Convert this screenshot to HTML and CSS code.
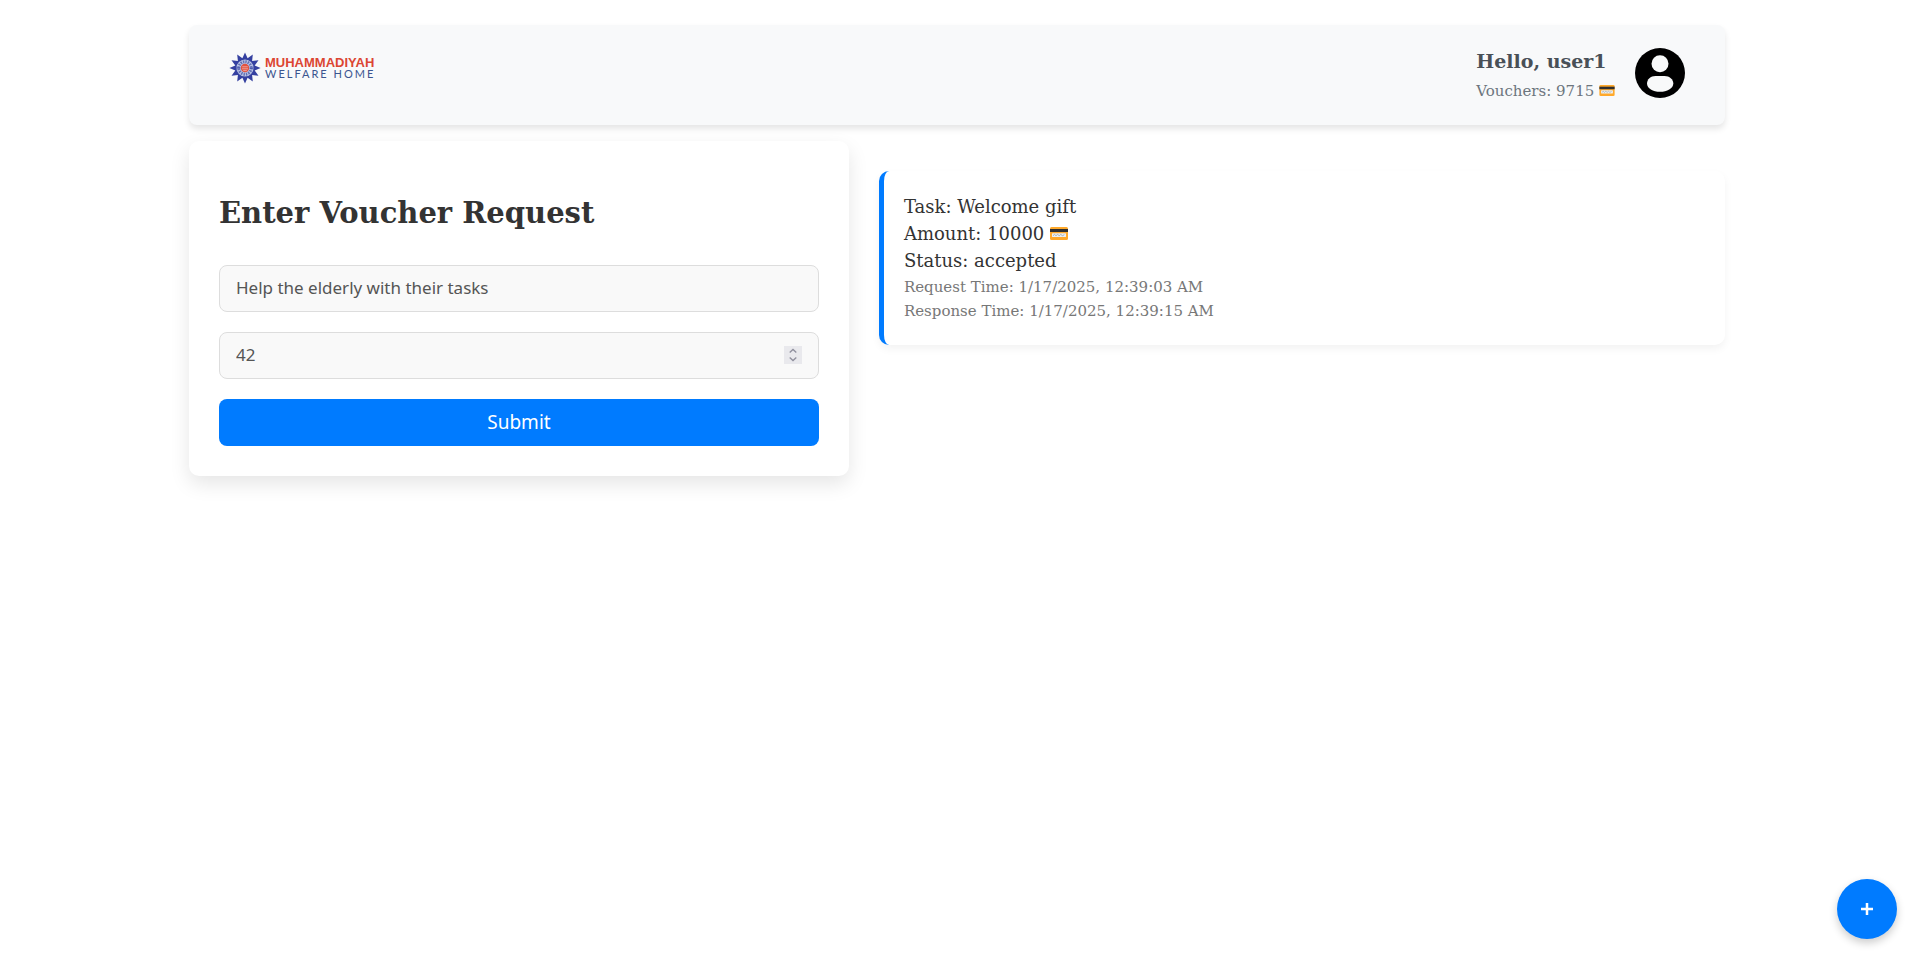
FILE: index.html
```html
<!DOCTYPE html>
<html lang="en">
<head>
<meta charset="utf-8">
<title>Voucher Requests</title>
<link rel="stylesheet" href="styles.css">
</head>
<body>
<svg class="defs" width="0" height="0" aria-hidden="true">
  <symbol id="card" viewBox="0 0 18 13">
    <rect width="18" height="13" rx="1.5" fill="#ffa92b"/>
    <rect y="2" width="18" height="3" fill="#2f2f2f"/>
    <rect x="2" y="6.3" width="14" height="3.6" rx=".5" fill="#eceff1"/>
    <path d="M3 8.7l1.5-1.3 1.5 1.3 1.6-1.3 1.6 1.3 1.6-1.3 1.6 1.3 2-1" fill="none" stroke="#8a989f" stroke-width=".7"/>
  </symbol>
</svg>
<div class="container">
  <header class="header">
    <div class="logo">
      <svg class="emblem" viewBox="-16 -16 32 32" aria-hidden="true">
        <path fill="#3440a0" d="M0-15.6 2.6-9.7 7.8-13.5 7.1-7.1 13.5-7.8 9.7-2.6 15.6 0 9.7 2.6 13.5 7.8 7.1 7.1 7.8 13.5 2.6 9.7 0 15.6-2.6 9.7-7.8 13.5-7.1 7.1-13.5 7.8-9.7 2.6-15.6 0-9.7-2.6-13.5-7.8-7.1-7.1-7.8-13.5-2.6-9.7z"/>
        <circle r="8.6" fill="#bcc5e6"/>
        <circle r="6.2" fill="none" stroke="#6170b5" stroke-width="3" stroke-dasharray="1.4 1"/>
        <circle r="4.2" fill="#e0523f"/>
        <path d="M-2.8-1.2h5.6M-3 .8h6M-1.8 2.6h3.6" stroke="#f4b4b0" stroke-width=".8"/>
        <path d="M-8.6 0h3.8M4.8 0h3.8" stroke="#3440a0" stroke-width="1"/>
      </svg>
      <div class="logo-text">
        <span class="logo-name">MUHAMMADIYAH</span>
        <span class="logo-sub">WELFARE HOME</span>
      </div>
    </div>
    <div class="profile">
      <div class="account">
        <div class="greeting">Hello, user1</div>
        <div class="balance">Vouchers: 9715 <svg class="card-small" role="img" aria-label="vouchers"><use href="#card"/></svg></div>
      </div>
      <svg class="avatar" viewBox="0 0 50 50" role="img" aria-label="Profile">
        <circle cx="25" cy="25" r="25"/>
        <circle cx="25" cy="15.7" r="8.5" fill="#f8f9fa"/>
        <path d="M20.5 28h9c5 0 8.800 3.500 8.800 7.500 0 5-6.300 8.300-13.300 8.300S12 40.500 12 35.500C12 31.500 15.500 28 20.500 28z" fill="#f8f9fa"/>
      </svg>
    </div>
  </header>
  <main class="content">
    <form class="request-form">
      <h2 class="title">Enter Voucher Request</h2>
      <input class="field" type="text" aria-label="Task" value="Help the elderly with their tasks">
      <div class="number">
        <input class="field" type="number" aria-label="Amount" value="42">
        <svg class="spinner" viewBox="0 0 18 18" aria-hidden="true">
          <rect width="18" height="18" fill="#e9e9ed"/>
          <path d="M5.700 6.500 9 3.500l3.300 3M5.700 11.500 9 14.500l3.300-3" fill="none" stroke="#8f8f9d" stroke-width="1.300"/>
        </svg>
      </div>
      <button class="submit" type="submit">Submit</button>
    </form>
    <section class="requests">
      <article class="request">
        <div>Task: Welcome gift</div>
        <div>Amount: 10000 <svg class="card-large" role="img" aria-label="vouchers"><use href="#card"/></svg></div>
        <div>Status: accepted</div>
        <div class="times">
          <div>Request Time: 1/17/2025, 12:39:03 AM</div>
          <div>Response Time: 1/17/2025, 12:39:15 AM</div>
        </div>
      </article>
    </section>
  </main>
</div>
<button class="add" type="button" aria-label="Add">
  <svg width="12" height="12" viewBox="0 0 12 12" aria-hidden="true"><path d="M6 0v12M0 6h12" stroke="#fff" stroke-width="2.500"/></svg>
</button>
</body>
</html>
```
FILE: styles.css
```css
* { box-sizing: border-box; }
body {
  min-height: 100vh;
  margin: 0;
  padding: 25px 0 0 7px;
  background: #fff;
  color: #333;
  font-family: "DejaVu Serif", serif;
}
.defs { position: absolute; }
.container { max-width: 1536px; margin: 0 auto; }
.header {
  display: flex;
  justify-content: space-between;
  align-items: center;
  min-height: 100px;
  padding: 14px 40px 18px;
  background: #f8f9fa;
  border-radius: 8px;
  box-shadow: 0 4px 6px rgba(0, 0, 0, .1);
}
.logo {
  display: flex;
  align-items: center;
  align-self: flex-start;
  gap: 4px;
  padding-top: 13px;
}
.emblem { width: 32px; height: 32px; }
.logo-text {
  display: flex;
  flex-direction: column;
}
.logo-name {
  color: #dc4632;
  font: bold 13px/11px "Liberation Sans", sans-serif;
}
.logo-sub {
  color: #3b558f;
  font: 11px/11px Lato, sans-serif;
  letter-spacing: 2px;
}
.profile { display: flex; align-items: center; gap: 20px; }
.account { padding-top: 7px; }
.greeting { color: #495057; font-size: 19px; line-height: 30px; font-weight: bold; }
.balance { color: #6c757d; font-size: 15px; line-height: 31px; }
.card-small { width: 16px; height: 11px; vertical-align: baseline; }
.card-large { width: 18px; height: 13px; vertical-align: baseline; }
.avatar { width: 50px; height: 50px; }
.content {
  display: grid;
  grid-template-columns: 39fr 50fr;
  align-items: start;
  gap: 30px;
  margin-top: 16px;
}
.request-form {
  display: flex;
  flex-direction: column;
  gap: 20px;
  padding: 30px;
  background: #fff;
  border-radius: 10px;
  box-shadow: 0 8px 20px rgba(0, 0, 0, .1);
}
.title { margin: 23px 0 13px; font-size: 29px; line-height: 38px; }
.field {
  display: block;
  width: 100%;
  height: 47px;
  padding: 0 16px 2px;
  border: 1px solid #ddd;
  border-radius: 8px;
  background: #f9f9f9;
  color: #555;
  font: 17px "Noto Sans", sans-serif;
}
.number { position: relative; }
.number .field { appearance: textfield; }
.spinner { position: absolute; top: 14px; right: 17px; width: 18px; height: 18px; }
.submit {
  height: 47px;
  padding: 0 0 2px;
  border: 0;
  border-radius: 8px;
  background: #007bff;
  color: #fff;
  font: 19px "Noto Sans", sans-serif;
}
.requests { padding-top: 30px; }
.request {
  padding: 22px 20px;
  border-left: 5px solid #007bff;
  border-radius: 10px;
  background: #fff;
  box-shadow: 0 4px 8px rgba(0, 0, 0, .05);
  font-size: 18px;
  line-height: 27px;
}
.times { margin-top: 1px; color: #777; font-size: 15px; line-height: 24px; }
.add {
  position: fixed;
  right: 10px;
  bottom: 17px;
  display: flex;
  align-items: center;
  justify-content: center;
  width: 60px;
  height: 60px;
  padding: 0;
  border: 0;
  border-radius: 50%;
  background: #007bff;
  box-shadow: 0 4px 8px rgba(0, 0, 0, .2);
}
```
